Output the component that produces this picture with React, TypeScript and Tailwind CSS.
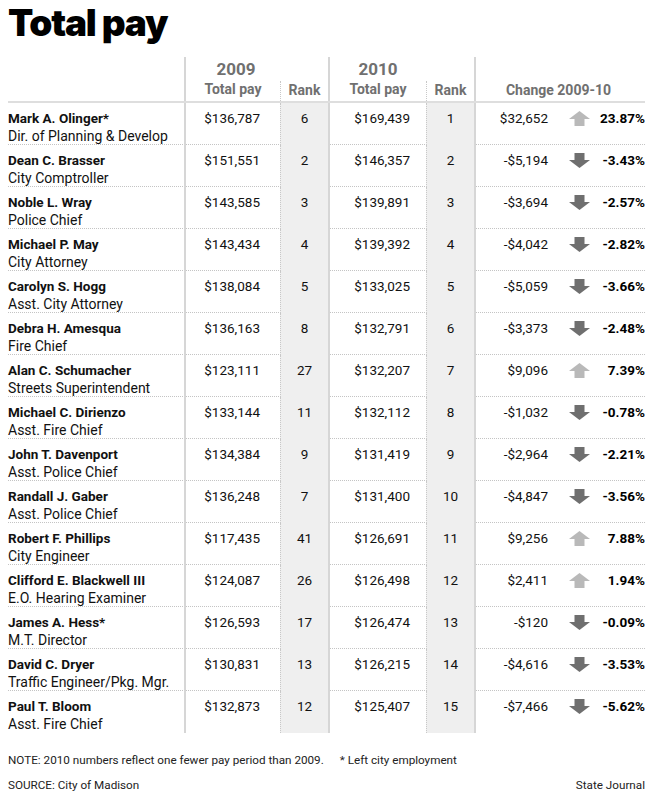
import React from "react";

type Row = [string, string, string, string, string, string, string, "up" | "down", string];

const rows: Row[] = [
  ["Mark A. Olinger*", "Dir. of Planning & Develop", "$136,787", "6", "$169,439", "1", "$32,652", "up", "23.87%"],
  ["Dean C. Brasser", "City Comptroller", "$151,551", "2", "$146,357", "2", "-$5,194", "down", "-3.43%"],
  ["Noble L. Wray", "Police Chief", "$143,585", "3", "$139,891", "3", "-$3,694", "down", "-2.57%"],
  ["Michael P. May", "City Attorney", "$143,434", "4", "$139,392", "4", "-$4,042", "down", "-2.82%"],
  ["Carolyn S. Hogg", "Asst. City Attorney", "$138,084", "5", "$133,025", "5", "-$5,059", "down", "-3.66%"],
  ["Debra H. Amesqua", "Fire Chief", "$136,163", "8", "$132,791", "6", "-$3,373", "down", "-2.48%"],
  ["Alan C. Schumacher", "Streets Superintendent", "$123,111", "27", "$132,207", "7", "$9,096", "up", "7.39%"],
  ["Michael C. Dirienzo", "Asst. Fire Chief", "$133,144", "11", "$132,112", "8", "-$1,032", "down", "-0.78%"],
  ["John T. Davenport", "Asst. Police Chief", "$134,384", "9", "$131,419", "9", "-$2,964", "down", "-2.21%"],
  ["Randall J. Gaber", "Asst. Police Chief", "$136,248", "7", "$131,400", "10", "-$4,847", "down", "-3.56%"],
  ["Robert F. Phillips", "City Engineer", "$117,435", "41", "$126,691", "11", "$9,256", "up", "7.88%"],
  ["Clifford E. Blackwell III", "E.O. Hearing Examiner", "$124,087", "26", "$126,498", "12", "$2,411", "up", "1.94%"],
  ["James A. Hess*", "M.T. Director", "$126,593", "17", "$126,474", "13", "-$120", "down", "-0.09%"],
  ["David C. Dryer", "Traffic Engineer/Pkg. Mgr.", "$130,831", "13", "$126,215", "14", "-$4,616", "down", "-3.53%"],
  ["Paul T. Bloom", "Asst. Fire Chief", "$132,873", "12", "$125,407", "15", "-$7,466", "down", "-5.62%"],
];

function Arrow({ dir }: { dir: "up" | "down" }) {
  if (dir === "up") {
    return (
      <svg width="21" height="15" viewBox="0 0 21 15">
        <polygon points="10.5,0 21,8 15.5,8 15.5,15 5.5,15 5.5,8 0,8" fill="#b9b9b9" />
      </svg>
    );
  }
  return (
    <svg width="21" height="15" viewBox="0 0 21 15">
      <polygon points="5.5,0 15.5,0 15.5,7 21,7 10.5,15 0,7 5.5,7" fill="#6f6f6f" />
    </svg>
  );
}

const grid = "grid grid-cols-[176px_96px_48px_98px_48px_171px]";

export default function App() {
  return (
    <div className="w-[655px] h-[799px] bg-white pl-2 text-[#111]" style={{ fontFamily: "Roboto, 'Liberation Sans', sans-serif" }}>
      <div className="h-[57px] pt-[1px]">
        <div className="text-[37px] leading-[44px] font-black tracking-[-1.2px] text-black" style={{ fontFamily: "Inter, 'Liberation Sans', sans-serif" }}>
          Total pay
        </div>
      </div>
      <div className={`${grid} h-[46px] border-b-2 border-[#dedede] w-[637px] text-[#707070] font-bold`}>
        <div />
        <div className="border-l-2 border-[#d6d6d6] flex flex-col items-center pt-[2px]">
          <div className="text-[17px] leading-[20px] pl-[6px]">2009</div>
          <div className="text-[14px] leading-[20px]">Total pay</div>
        </div>
        <div className="flex flex-col justify-end">
          <div className="h-[20px] border-l border-dotted border-[#c8c8c8] text-[14px] leading-[18px] text-center">Rank</div>
        </div>
        <div className="border-l-2 border-[#d6d6d6] flex flex-col items-center pt-[2px]">
          <div className="text-[17px] leading-[20px]">2010</div>
          <div className="text-[14px] leading-[20px]">Total pay</div>
        </div>
        <div className="flex flex-col justify-end">
          <div className="h-[20px] border-l border-dotted border-[#c8c8c8] text-[14px] leading-[18px] text-center">Rank</div>
        </div>
        <div className="border-l-2 border-[#d6d6d6] flex flex-col justify-end">
          <div className="h-[20px] text-[14px] leading-[18px] text-center pr-[4px]">Change 2009-10</div>
        </div>
      </div>
      {rows.map((r, i) => (
        <div
          key={i}
          className={`${grid} h-[42px] w-[637px] text-[13.5px] leading-[18px] ${i < rows.length - 1 ? "border-b border-dotted border-[#c4c4c4]" : ""}`}
        >
          <div className="pt-[6px]">
            <div className="font-bold">{r[0]}</div>
            <div className="whitespace-nowrap text-[14px]">{r[1]}</div>
          </div>
          <div className="border-l-2 border-[#d6d6d6] pt-[6px] text-right pr-[20px]">{r[2]}</div>
          <div className="border-l border-dotted border-[#c8c8c8] bg-[#efefef] pt-[6px] text-center">{r[3]}</div>
          <div className="border-l-2 border-[#d6d6d6] pt-[6px] text-right pr-[16px]">{r[4]}</div>
          <div className="border-l border-dotted border-[#c8c8c8] bg-[#efefef] pt-[6px] text-center">{r[5]}</div>
          <div className="border-l-2 border-[#d6d6d6] pt-[6px] flex items-start">
            <div className="w-[72px] text-right">{r[6]}</div>
            <div className="ml-[21px] w-[21px] pt-[2px]">
              <Arrow dir={r[7]} />
            </div>
            <div className="flex-1 text-right font-bold text-black">{r[8]}</div>
          </div>
        </div>
      ))}
      <div className="mt-[19px] text-[11.7px] leading-[16px] text-[#222] flex">
        <span>NOTE: 2010 numbers reflect one fewer pay period than 2009.</span>
        <span className="ml-[16px]">* Left city employment</span>
      </div>
      <div className="mt-[9px] text-[11.7px] leading-[16px] text-[#222] flex justify-between w-[637px]">
        <span>SOURCE: City of Madison</span>
        <span>State Journal</span>
      </div>
    </div>
  );
}
